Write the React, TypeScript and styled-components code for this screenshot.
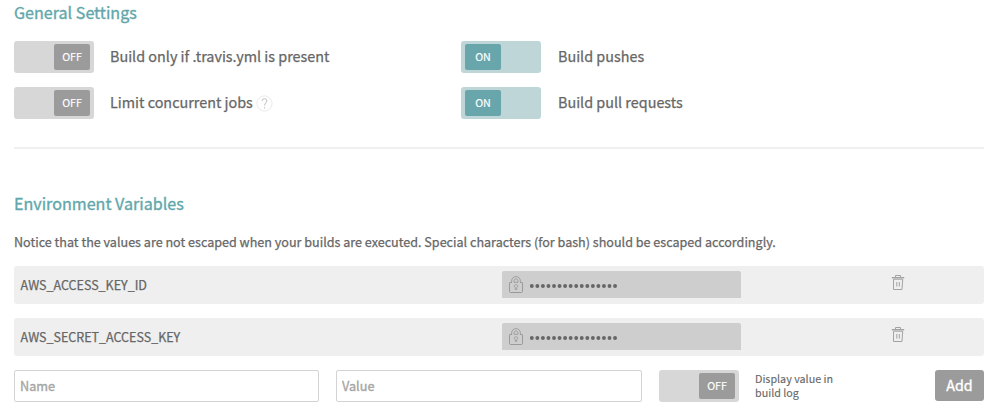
import React from "react";
import styled, { createGlobalStyle } from "styled-components";

const GlobalStyle = createGlobalStyle`
  *, *::before, *::after { box-sizing: border-box; }
  body {
    margin: 0;
    background: #fff;
    color: #666;
    font-family: "Source Sans Pro", "Noto Sans CJK SC", sans-serif;
    -webkit-text-stroke: 0.25px currentColor;
    overflow: hidden;
  }
`;

const Page = styled.main`
  width: 992px;
  height: 410px;
  padding: 0 8px 0 14px;
  overflow: hidden;
`;

const Heading = styled.h2`
  margin: 0;
  height: 26px;
  line-height: 24px;
  font-size: 16.1px;
  font-weight: 400;
  color: #62a7ab;
  -webkit-text-stroke-width: 0.35px;
`;

const General = styled.section`
  height: 149px;
  border-bottom: 2px solid #efefef;
`;

const SettingsGrid = styled.div`
  display: grid;
  grid-template-columns: 447px 1fr;
  row-gap: 14px;
  padding-top: 15px;
`;

const Setting = styled.div`
  display: flex;
  align-items: center;
  height: 32px;
`;

const Track = styled.button<{ $on?: boolean }>`
  display: flex;
  flex: none;
  justify-content: ${(p) => (p.$on ? "flex-start" : "flex-end")};
  align-items: center;
  width: 80px;
  height: 32px;
  padding: 0 4px;
  border: 0;
  border-radius: 3px;
  background: ${(p) => (p.$on ? "#bed6d8" : "#d7d7d7")};
  font-family: inherit;
  -webkit-text-stroke: 0.15px currentColor;
`;

const Knob = styled.span<{ $on?: boolean }>`
  width: 36px;
  height: 26px;
  border-radius: 2px;
  background: ${(p) => (p.$on ? "#69a6ac" : "#9b9b9b")};
  color: #fff;
  font-size: 10.7px;
  line-height: 26px;
  text-align: center;
`;

const SettingLabel = styled.span<{ $gap?: number }>`
  margin-left: ${(p) => p.$gap ?? 16}px;
  font-size: 14.38px;
  height: 30px;
  line-height: 28px;
  white-space: nowrap;
`;

const HelpIcon = styled.svg`
  display: block;
  margin-left: 3px;
`;

const Environment = styled.section`
  padding-top: 42px;
`;

const Notice = styled.p`
  margin: 13px 0 0;
  height: 24px;
  line-height: 24px;
  font-size: 12.58px;
  white-space: nowrap;
`;

const VariableRow = styled.div`
  display: grid;
  grid-template-columns: 482px 239px 1fr;
  align-items: center;
  height: 38px;
  padding: 0 6px;
  border-radius: 3px;
  background: #efefef;
`;

const VariableList = styled.div`
  display: grid;
  row-gap: 14px;
  margin-top: 12px;
`;

const VariableName = styled.span`
  padding-left: 0.6px;
  font-size: 12.5px;
  line-height: 24px;
`;

const SecretField = styled.div`
  display: flex;
  align-items: center;
  height: 27px;
  margin-top: -1px;
  padding-left: 7px;
  border-radius: 2px 2px 0 0;
  background: #cecece;
`;

const Dots = styled.svg`
  display: block;
  margin: 2px 0 0 6px;
`;

const DeleteButton = styled.button`
  display: block;
  width: 14px;
  height: 17px;
  margin: -5px 0 0 150px;
  padding: 0;
  border: 0;
  background: none;
`;

const AddForm = styled.form`
  display: flex;
  align-items: flex-start;
  margin-top: 14px;
`;

const TextInput = styled.input<{ $width: number }>`
  width: ${(p) => p.$width}px;
  height: 32px;
  margin-right: 17px;
  padding: 0 5px 2px;
  border: 1px solid #d3d3d3;
  border-radius: 2px;
  background: #fff;
  color: #666;
  font-family: inherit;
  font-size: 12.7px;
  -webkit-text-stroke: 0.35px currentColor;
  &::placeholder { color: #a5a5a5; }
`;

const DisplayLabel = styled.span`
  width: 110px;
  margin: 2px 0 0 16px;
  font-size: 10.75px;
  line-height: 14px;
  -webkit-text-stroke: 0.1px currentColor;
`;

const AddButton = styled.button`
  width: 49px;
  height: 31px;
  margin-left: auto;
  padding: 0 0 2px;
  border: 0;
  border-radius: 3px;
  background: #9b9b9b;
  color: #fff;
  font-family: inherit;
  font-size: 14.3px;
  line-height: 29px;
  -webkit-text-stroke: 0.35px currentColor;
`;

function Toggle({ on }: { on?: boolean }) {
  return (
    <Track type="button" role="switch" aria-checked={!!on} $on={on}>
      <Knob $on={on}>{on ? "ON" : "OFF"}</Knob>
    </Track>
  );
}

function Help() {
  return (
    <HelpIcon width="17" height="17" viewBox="0 0 17 17" fill="none">
      <circle cx="8.5" cy="8.5" r="7.6" stroke="#e9e9e9" />
      <path d="M6.1 6C6.1 2.9 11 2.9 10.9 6C10.8 7.9 8.6 8 8.6 10.6" stroke="#b5b5b5" strokeWidth="0.9" />
      <path d="M8.6 12.3V13.5" stroke="#b5b5b5" />
    </HelpIcon>
  );
}

function Lock() {
  return (
    <svg width="14" height="17" viewBox="0 0 14 17" fill="none" stroke="#9a9a9a" strokeWidth="0.9">
      <path d="M2.6 6.3V5.2C2.6-.9 11.4-.9 11.4 5.2V6.3" />
      <path d="M5 6.3V5C5 2.3 9 2.3 9 5V6.3Z" />
      <path d="M3 6.5H.9Q.5 6.5 .5 7V15.4Q.5 16.5 1.6 16.5H12.4Q13.5 16.5 13.5 15.4V7Q13.5 6.5 13.1 6.5H11" strokeWidth="1" />
      <path d="M6.3 11.4C4.3 10.2 5.3 8.8 7 8.8S9.7 10.2 7.8 11.4V13.4Q7 14.4 6.3 13.4Z" />
    </svg>
  );
}

function Trash() {
  return (
    <svg width="14" height="17" viewBox="0 0 14 17" fill="none" stroke="#a3a3a3">
      <path d="M4.5 3V1.5H9.5V3" />
      <path d="M.8 3.7H13.2" strokeWidth="1.4" />
      <path d="M2.5 5.2V15.5H11L11.7 5.2Z" />
      <path d="M5.8 8V12.5M8.3 8V12.5" />
    </svg>
  );
}

function Variable({ name }: { name: string }) {
  return (
    <VariableRow>
      <VariableName>{name}</VariableName>
      <SecretField>
        <Lock />
        <Dots width="90" height="6" fill="#666">
          {Array.from({ length: 16 }, (_, i) => (
            <circle key={i} cx={2.8 + i * 5.55} cy="3" r="1.95" />
          ))}
        </Dots>
      </SecretField>
      <DeleteButton type="button" aria-label="Delete">
        <Trash />
      </DeleteButton>
    </VariableRow>
  );
}

export default function App() {
  return (
    <Page>
      <GlobalStyle />
      <General>
        <Heading>General Settings</Heading>
        <SettingsGrid>
          <Setting>
            <Toggle />
            <SettingLabel>Build only if .travis.yml is present</SettingLabel>
          </Setting>
          <Setting>
            <Toggle on />
            <SettingLabel $gap={17}>Build pushes</SettingLabel>
          </Setting>
          <Setting>
            <Toggle />
            <SettingLabel>Limit concurrent jobs</SettingLabel>
            <Help />
          </Setting>
          <Setting>
            <Toggle on />
            <SettingLabel $gap={17}>Build pull requests</SettingLabel>
          </Setting>
        </SettingsGrid>
      </General>
      <Environment>
        <Heading>Environment Variables</Heading>
        <Notice>
          Notice that the values are not escaped when your builds are executed. Special characters (for bash) should be
          escaped accordingly.
        </Notice>
        <VariableList>
          <Variable name="AWS_ACCESS_KEY_ID" />
          <Variable name="AWS_SECRET_ACCESS_KEY" />
        </VariableList>
        <AddForm>
          <TextInput $width={305} placeholder="Name" />
          <TextInput $width={306} placeholder="Value" />
          <Toggle />
          <DisplayLabel>
            Display value in
            <br />
            build log
          </DisplayLabel>
          <AddButton type="button">Add</AddButton>
        </AddForm>
      </Environment>
    </Page>
  );
}
